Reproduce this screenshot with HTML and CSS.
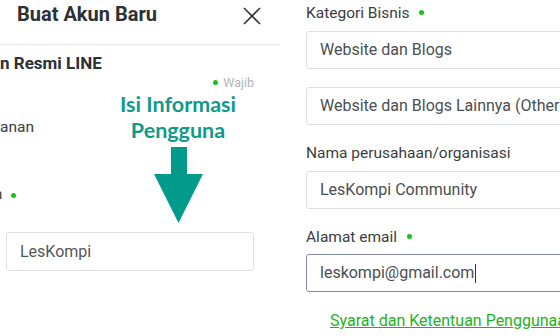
FILE: index.html
```html
<!DOCTYPE html>
<html lang="id">

<head>
    <meta charset="UTF-8">
    <meta name="viewport" content="width=device-width, initial-scale=1.0">
    <title>Buat Akun Baru</title>
    <link rel="stylesheet" href="styles.css">
</head>

<body>

    <!-- Left screenshot: account form, step 1 -->
    <div class="panel left">
        <div class="header">
            <h1>Buat Akun Baru</h1>
            <svg class="close" width="18" height="18" viewBox="0 0 18 18">
                <path d="M1 1 L17 17 M17 1 L1 17" stroke="#33363a" stroke-width="1.6" fill="none" />
            </svg>
        </div>

        <div class="content">
            <h2 class="sec-title">n Resmi LINE</h2>
            <div class="required"><span class="dot"></span>Wajib</div>
            <p class="cut-text">anan</p>
            <div class="cut-label"><span class="cut-n">n</span><span class="dot"></span></div>
            <div class="field small">LesKompi</div>
        </div>

        <!-- Annotation -->
        <div class="note">Isi Informasi<br>Pengguna</div>
        <svg class="arrow" width="49" height="76" viewBox="0 0 49 76">
            <polygon points="17,0 33,0 33,27 49,27 24.5,76 0,27 17,27" fill="#029a8b" />
        </svg>
    </div>

    <!-- Right screenshot: account form, step 2 -->
    <div class="panel right">
        <label>Kategori Bisnis <span class="dot"></span></label>
        <div class="field">Website dan Blogs</div>
        <div class="field gap">Website dan Blogs Lainnya (Others)</div>

        <label class="after">Nama perusahaan/organisasi</label>
        <div class="field">LesKompi Community</div>

        <label class="after">Alamat email <span class="dot"></span></label>
        <div class="field focus">leskompi@gmail.com<span class="cursor"></span></div>

        <a class="terms" href="#">Syarat dan Ketentuan Penggunaan</a>
    </div>

</body>

</html>
```

FILE: styles.css
```css
body {
    margin: 0;
    width: 560px;
    height: 336px;
    overflow: hidden;
    background: #fff;
    font-family: Roboto, "Noto Sans", sans-serif;
    display: flex;
}

.panel {
    height: 336px;
    overflow: hidden;
}

.dot {
    display: inline-block;
    width: 5px;
    height: 5px;
    border-radius: 50%;
    background: #17c317;
    vertical-align: middle;
}

/* Left panel */
.left {
    position: relative;
    width: 280px;
    flex-shrink: 0;
}

.header {
    height: 45px;
    border-bottom: 1px solid #e4e6e9;
    display: flex;
    justify-content: space-between;
    align-items: flex-start;
    padding: 2px 19px 0 17px;
    box-sizing: border-box;
}

.header h1 {
    margin: 0;
    font-size: 20px;
    line-height: 24px;
    font-weight: 700;
    color: #2d3034;
}

.close {
    margin-top: 5px;
}

.content {
    padding-right: 26px;
}

.sec-title {
    margin: 8px 0 0;
    font-size: 17px;
    line-height: 20px;
    font-weight: 700;
    color: #2d3034;
}

.required {
    margin-top: 2px;
    text-align: right;
    font-size: 12.5px;
    line-height: 16px;
    color: #b2b5ba;
}

.required .dot {
    margin-right: 5px;
    margin-top: -2px;
}

.cut-text {
    margin: 26px 0 0;
    font-size: 15.5px;
    line-height: 20px;
    color: #3a3d41;
}

.cut-label {
    margin-top: 47px;
    font-size: 15px;
    line-height: 20px;
    color: #3a3d41;
}

.cut-n {
    margin-left: -6px;
    margin-right: 9px;
}

.field {
    width: 300px;
    height: 38px;
    border: 1px solid #dfe1e5;
    border-radius: 3px;
    box-sizing: border-box;
    padding-left: 13px;
    font-size: 16px;
    line-height: 36px;
    color: #4b4e52;
    white-space: nowrap;
    overflow: hidden;
}

.field.small {
    width: 248px;
    height: 39px;
    margin: 28px 0 0 6px;
    line-height: 37px;
    color: #53575c;
}

.note {
    position: absolute;
    left: 96px;
    top: 91px;
    width: 164px;
    text-align: center;
    font-family: Lato, "Open Sans", sans-serif;
    font-weight: 700;
    font-size: 21.5px;
    line-height: 26px;
    color: #0f9a8b;
}

.arrow {
    position: absolute;
    left: 154px;
    top: 147px;
}

/* Right panel */
.right {
    flex: 1;
    padding: 3px 0 0 26px;
    box-sizing: border-box;
}

.right label {
    display: block;
    font-size: 15.5px;
    line-height: 20px;
    color: #3b3d40;
    margin-bottom: 8px;
}

.right label .dot {
    margin-left: 6px;
    margin-top: -2px;
}

.right label.after {
    margin-top: 18px;
}

.field.gap {
    margin-top: 18px;
}

.field.focus {
    border-color: #858ca3;
    margin-top: -1px;
}

.cursor {
    display: inline-block;
    width: 1px;
    height: 19px;
    background: #333;
    vertical-align: middle;
    margin-left: 1px;
}

.terms {
    display: block;
    margin: 19px 0 0 24px;
    font-size: 16px;
    line-height: 20px;
    color: #1db31d;
    white-space: nowrap;
}
```
